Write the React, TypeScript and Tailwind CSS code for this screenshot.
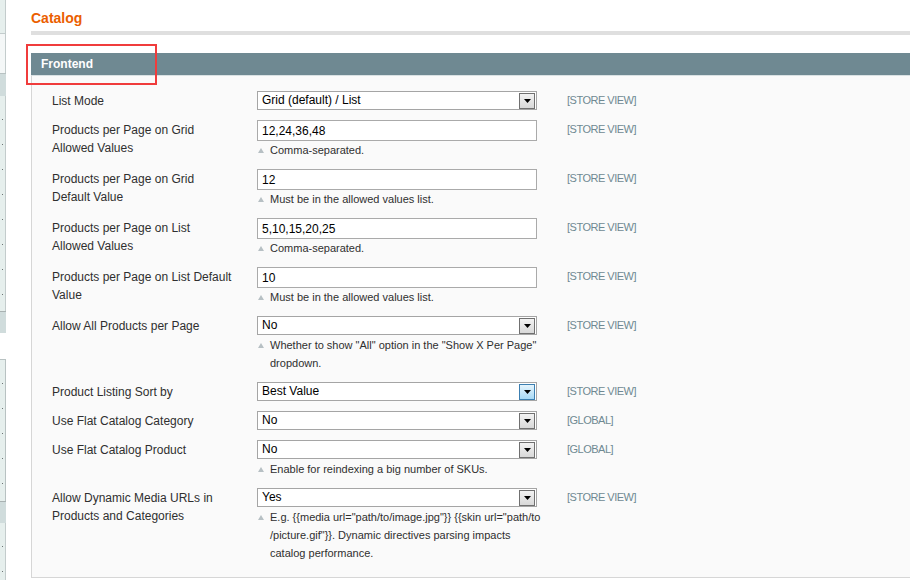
import React from 'react';

type Row = {
  label: string[];
  type: 'select' | 'text';
  value: string;
  scope: string;
  note?: string[];
  hover?: boolean;
};

const rows: Row[] = [
  { label: ['List Mode'], type: 'select', value: 'Grid (default) / List', scope: '[STORE VIEW]' },
  {
    label: ['Products per Page on Grid', 'Allowed Values'],
    type: 'text',
    value: '12,24,36,48',
    scope: '[STORE VIEW]',
    note: ['Comma-separated.']
  },
  {
    label: ['Products per Page on Grid', 'Default Value'],
    type: 'text',
    value: '12',
    scope: '[STORE VIEW]',
    note: ['Must be in the allowed values list.']
  },
  {
    label: ['Products per Page on List', 'Allowed Values'],
    type: 'text',
    value: '5,10,15,20,25',
    scope: '[STORE VIEW]',
    note: ['Comma-separated.']
  },
  {
    label: ['Products per Page on List Default', 'Value'],
    type: 'text',
    value: '10',
    scope: '[STORE VIEW]',
    note: ['Must be in the allowed values list.']
  },
  {
    label: ['Allow All Products per Page'],
    type: 'select',
    value: 'No',
    scope: '[STORE VIEW]',
    note: ['Whether to show "All" option in the "Show X Per Page"', 'dropdown.']
  },
  { label: ['Product Listing Sort by'], type: 'select', value: 'Best Value', scope: '[STORE VIEW]', hover: true },
  { label: ['Use Flat Catalog Category'], type: 'select', value: 'No', scope: '[GLOBAL]' },
  {
    label: ['Use Flat Catalog Product'],
    type: 'select',
    value: 'No',
    scope: '[GLOBAL]',
    note: ['Enable for reindexing a big number of SKUs.']
  },
  {
    label: ['Allow Dynamic Media URLs in', 'Products and Categories'],
    type: 'select',
    value: 'Yes',
    scope: '[STORE VIEW]',
    note: [
      'E.g. {{media url="path/to/image.jpg"}} {{skin url="path/to',
      '/picture.gif"}}. Dynamic directives parsing impacts',
      'catalog performance.'
    ]
  }
];

function Dots({ count }: { count: number }) {
  return (
    <>
      {Array.from({ length: count }).map((_, i) => (
        <div key={i} className="flex h-[25px] items-end gap-[2px] pl-[2px] pb-[1px]">
          <span className="h-px w-px bg-[#6b7373]" />
          <span className="h-px w-px bg-[#6b7373]" />
        </div>
      ))}
    </>
  );
}

function Sidebar() {
  return (
    <aside className="flex w-[6px] shrink-0 flex-col">
      <div className="h-[33px] border-r border-[#c3cccc] bg-[#e6efed]" />
      <div className="h-[40px] border-t border-r border-[#c3cccc] bg-[#f4f7f7]" />
      <div className="h-[23px] border-t border-[#b8c2c2] bg-[#d0dcdc]" />
      <div className="h-[215px] overflow-hidden border-r border-[#c3cccc] bg-[#e6efed]">
        <Dots count={8} />
      </div>
      <div className="h-[22px] border-t border-[#a9b2b2] bg-[#d0dcdc]" />
      <div className="h-[26px] bg-white" />
      <div className="h-[142px] overflow-hidden border-t border-r border-[#b8c2c2] bg-[#e6efed]">
        <Dots count={5} />
      </div>
      <div className="h-[22px] border-t border-[#a9b2b2] bg-[#d0dcdc]" />
      <div className="flex-1 overflow-hidden border-r border-[#c3cccc] bg-[#e6efed]">
        <Dots count={3} />
      </div>
    </aside>
  );
}

function SelectBox({ value, hover }: { value: string; hover?: boolean }) {
  return (
    <div className="flex h-[19px] w-[280px] items-center justify-between border border-[#a5a5a5] bg-white pl-[4px] pr-px text-[12px] text-black">
      <span className="leading-[17px]">{value}</span>
      <span
        className={
          hover
            ? 'flex h-[16px] w-[16px] items-center justify-center border border-[#3c7fb1] bg-gradient-to-b from-[#e5f4fc] to-[#a7d9f5]'
            : 'flex h-[16px] w-[16px] items-center justify-center border border-[#707070] bg-gradient-to-b from-[#f2f2f2] to-[#d8d8d8]'
        }
      >
        <svg width="7" height="4" viewBox="0 0 7 4">
          <path d="M0 0h7L3.5 4z" fill="#000" />
        </svg>
      </span>
    </div>
  );
}

function Note({ lines, afterSelect }: { lines: string[]; afterSelect: boolean }) {
  return (
    <div className={afterSelect ? 'mt-px flex' : 'flex'}>
      <span className="flex h-[18px] w-[13px] shrink-0 items-center pl-px">
        <svg width="6" height="5" viewBox="0 0 6 5">
          <path d="M3 0l3 5H0z" fill="#b7c0c4" />
        </svg>
      </span>
      <div className="text-[11px] leading-[18px] whitespace-nowrap text-[#2f2f2f]">
        {lines.map((line) => (
          <div key={line}>{line}</div>
        ))}
      </div>
    </div>
  );
}

export default function App() {
  return (
    <div className="relative flex h-[580px] w-[910px] overflow-hidden bg-white font-['Liberation_Sans',Arial,sans-serif]">
      <Sidebar />

      <main className="ml-[25px] flex-1">
        <div className="border-b-4 border-[#dfdfdf] pt-[9px] pb-[4px]">
          <h3 className="text-[14px] font-bold leading-[18px] text-[#eb5e00]">Catalog</h3>
        </div>

        <div className="mt-[18px] h-[22px] bg-[#6f8992] pl-[10px] text-[12px] font-bold leading-[22px] text-white">
          Frontend
        </div>

        <div className="w-[900px] border-t border-l border-b border-t-[#d9e1e3] border-l-[#d6d6d6] border-b-[#d6d6d6] bg-[#fafafa] pt-[15px] pb-[15px] pl-[20px]">
          <div className="flex flex-col gap-[10px]">
            {rows.map((row) => (
              <div key={row.label.join(' ')} className="flex items-start">
                <div className="mr-[19px] w-[186px] pt-px text-[12px] leading-[18px] text-[#2f2f2f]">
                  {row.label.map((line) => (
                    <div key={line}>{line}</div>
                  ))}
                </div>
                <div className="w-[280px]">
                  {row.type === 'select' ? (
                    <SelectBox value={row.value} hover={row.hover} />
                  ) : (
                    <div className="flex h-[21px] w-[280px] items-center border border-[#aaaaaa] bg-white pl-[4px] text-[12px] text-black">
                      {row.value}
                    </div>
                  )}
                  {row.note && <Note lines={row.note} afterSelect={row.type === 'select'} />}
                </div>
                <div className="ml-[30px] text-[11px] leading-[18px] tracking-[-0.5px] text-[#6f8992]">{row.scope}</div>
              </div>
            ))}
          </div>
        </div>
      </main>

      {/* red annotation box */}
      <div className="pointer-events-none absolute top-[44px] left-[26px] h-[41px] w-[131px] border-2 border-[#f03c3c]" />
    </div>
  );
}
